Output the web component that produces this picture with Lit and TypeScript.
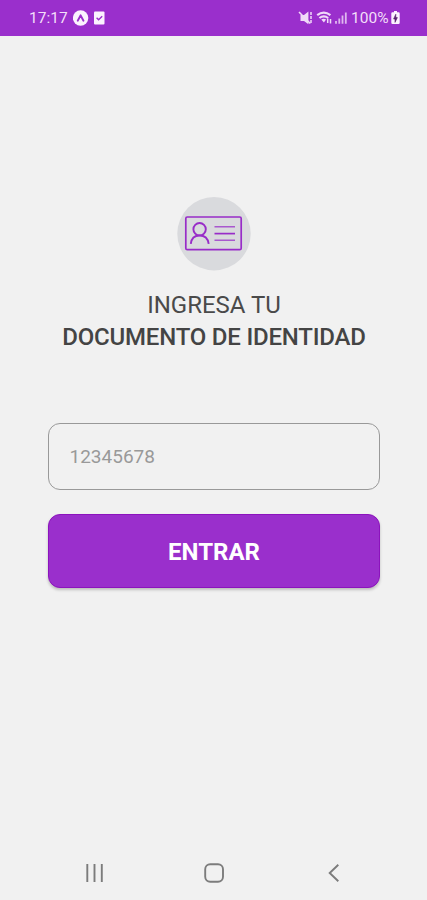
import { LitElement, html, css } from "lit";
import { customElement } from "lit/decorators.js";

@customElement("status-bar")
class StatusBar extends LitElement {
  static styles = css`
    :host {
      display: flex;
      align-items: center;
      justify-content: space-between;
      box-sizing: border-box;
      height: 35.5px;
      padding: 0 26px 0 29px;
      background: #9a2fcc;
      color: #f3def9;
      font: 400 15.5px/36px Roboto, sans-serif;
    }
    .group { display: flex; align-items: center; height: 36px; }
    .time { width: 44px; padding-top: 1px; white-space: nowrap; }
    .pct { width: 40px; padding-top: 1px; white-space: nowrap; }
    svg { display: block; }
  `;
  render() {
    return html`
      <div class="group">
        <span class="time">17:17</span>
        <svg width="34" height="18" viewBox="73 9 34 18">
          <circle cx="80.6" cy="18" r="7.7" fill="#fbf3fe" />
          <path d="M77.8 20.6 80.6 15.4l2.800 5.200" fill="none" stroke="#9a2fcc" stroke-width="2" stroke-linecap="round" stroke-linejoin="round" />
          <rect x="94" y="11.5" width="10.5" height="13" rx="1" fill="#fbf3fe" />
          <path d="m96.6 17.8 2 2 3.6-3.6" fill="none" stroke="#9a2fcc" stroke-width="1.4" />
        </svg>
      </div>
      <div class="group">
        <svg width="53" height="18" viewBox="298 9 53 18" fill="none" stroke="#f0d9f8">
          <path d="M300.500 15h3.500l4.400-3.600v12.900L304 21h-3.500z" fill="#f0d9f8" stroke="none" />
          <path d="m299 12 11.3 11.500" stroke-width="1.600" />
          <path d="M311 12v12" stroke-width="1.500" stroke-dasharray="3 1" />
          <path d="M317.2 15.2q6.6-5 13.2 0M319.4 18q4.4-3.4 8.800 0" stroke-width="2.200" />
          <path d="m321.3 19.6 2.6 3 2.2-3q-2.4-1.8-4.8 0z" fill="#f0d9f8" stroke="none" />
          <path d="M327.7 18.5v4.5M330.5 19v4.5" stroke-width="1.5" />
          <path d="M336 21v2.8M339.3 18.5v5.3M342.5 15.5v8.3M345.8 12.5v11.3" stroke-width="1.8" opacity=".8" />
        </svg>
        <span class="pct">100%</span>
        <svg width="10" height="18" viewBox="391 9 10 18">
          <path d="M394 11h3v1.3h1.5q1.2 0 1.2 1.2v9.3q0 1.2-1.2 1.2h-6q-1.2 0-1.2-1.2v-9.3q0-1.2 1.2-1.2H394z" fill="#fbf3fe" />
          <path d="M395.8 14.2 393.6 19h1.4v3.4l2.4-4.8h-1.6z" fill="#57206f" stroke="#57206f" stroke-width=".6" />
        </svg>
      </div>
    `;
  }
}

@customElement("nav-bar")
class NavBar extends LitElement {
  static styles = css`
    :host {
      display: flex;
      align-items: center;
      justify-content: space-between;
      height: 55px;
      padding: 0 82px;
    }
    svg { display: block; fill: none; stroke: #7c7c7c; stroke-width: 1.9; }
  `;
  render() {
    return html`
      <svg width="24" height="24"><path d="M5.300 3v18M12.500 3v18M19.800 3v18" /></svg>
      <svg width="24" height="24"><rect x="3.2" y="3.2" width="17.8" height="17.6" rx="5" /></svg>
      <svg width="24" height="24"><path d="m17.3 3.8-8.6 8.2 8.6 8.2" /></svg>
    `;
  }
}

@customElement("app-root")
class AppRoot extends LitElement {
  static styles = css`
    :host {
      display: flex;
      flex-direction: column;
      height: 900px;
      background: #f1f1f1;
      font-family: Roboto, sans-serif;
    }
    main {
      flex: 1;
      display: flex;
      flex-direction: column;
      padding: 161.5px 47px 0 48px;
    }
    .badge { display: block; align-self: center; }
    h1 {
      margin: 18px 0 0;
      font-size: 24px;
      line-height: 32px;
      font-weight: 400;
      text-align: center;
      color: #4a4a4a;
      white-space: nowrap;
    }
    h1 span, h1 strong { display: block; }
    strong { font-weight: 500; color: #444; letter-spacing: -0.2px; }
    input {
      box-sizing: border-box;
      width: 100%;
      height: 66.500px;
      margin: 70px 0 0;
      padding: 1px 21px 0 20.5px;
      border: 1px solid #999;
      border-radius: 12px;
      background: transparent;
      font: 400 19px Roboto, sans-serif;
      outline: none;
    }
    input::placeholder { color: #999; opacity: 1; }
    button {
      width: 100%;
      height: 74px;
      margin: 24px 0 0;
      padding: 2px 0 0;
      border: 1px solid #8c13bd;
      border-radius: 12px;
      background: #9a2fcc;
      color: #fff;
      font: 700 24px Roboto, sans-serif;
      box-shadow: 0 2px 3px rgba(0, 0, 0, 0.22);
    }
  `;
  render() {
    return html`
      <status-bar></status-bar>
      <main>
        <svg class="badge" width="74" height="74" viewBox="177 197 74 74" fill="none" stroke="#982cc8">
          <circle cx="214" cy="233.7" r="36.7" fill="#d9dadd" stroke="none" />
          <rect x="185.8" y="217" width="55.4" height="32.7" rx="1.5" stroke-width="1.7" />
          <circle cx="199.6" cy="229.2" r="6.2" stroke-width="1.9" />
          <path d="M190.8 243.8c.6-5.2 4-8.3 8.8-8.3s8.3 3.1 9.1 8.3" stroke-width="1.9" />
          <path d="M214.5 226.800h20.500M214.5 240.300h20.500" stroke-width="1.5" opacity=".75" />
          <path d="M214.5 233.600h20.500" stroke-width="1.7" />
        </svg>
        <h1><span>INGRESA TU</span><strong>DOCUMENTO DE IDENTIDAD</strong></h1>
        <input placeholder="12345678" inputmode="numeric" />
        <button>ENTRAR</button>
      </main>
      <nav-bar></nav-bar>
    `;
  }
}
